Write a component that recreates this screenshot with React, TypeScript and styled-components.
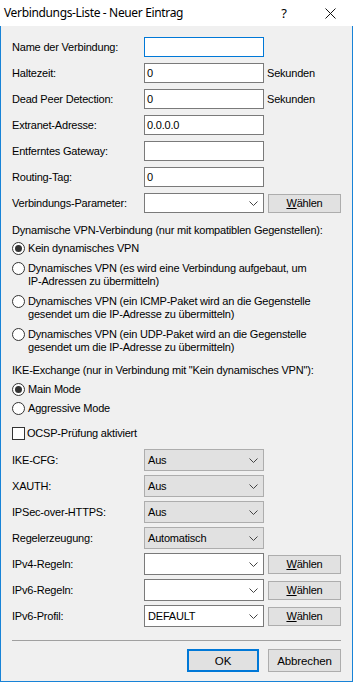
import React from "react";
import styled, { createGlobalStyle } from "styled-components";

const Global = createGlobalStyle`
  html, body { margin: 0; padding: 0; background: #f0f0f0; overflow: hidden; }
  * { box-sizing: border-box; }
`;

const Window = styled.div`
  width: 353px;
  height: 682px;
  display: flex;
  flex-direction: column;
  background: #f0f0f0;
  border: 1px solid #1883d7;
  border-top: none;
  font-family: "Liberation Sans", Arial, sans-serif;
  font-size: 11px;
  letter-spacing: -0.2px;
  color: #000;
`;

const TitleBar = styled.div`
  height: 26px;
  flex: none;
  background: #fff;
  display: flex;
  align-items: center;
  margin: 0 -1px;
  padding-left: 4px;
`;

const Title = styled.div`
  flex: 1;
  font-family: "Noto Sans", "Open Sans", sans-serif;
  font-size: 12px;
  letter-spacing: -0.35px;
  color: #000;
  padding-bottom: 1px;
`;

const TitleButton = styled.div<{ $w: number }>`
  width: ${(p) => p.$w}px;
  height: 26px;
  display: flex;
  align-items: center;
  justify-content: center;
  font-family: "Noto Sans", sans-serif;
  font-size: 13px;
  letter-spacing: 0;
`;

const Client = styled.div`
  flex: 1;
  display: flex;
  flex-direction: column;
  padding: 0 11px 9px 11px;
`;

const Rows = styled.div<{ $mt: number; $gap: number }>`
  display: flex;
  flex-direction: column;
  gap: ${(p) => p.$gap}px;
  margin-top: ${(p) => p.$mt}px;
`;

const Row = styled.div<{ $h: number }>`
  display: grid;
  grid-template-columns: 128px 120px 73px;
  column-gap: 4px;
  align-items: center;
  height: ${(p) => p.$h}px;
`;

const Label = styled.div`
  white-space: nowrap;
`;

const TextBox = styled.div<{ $focus?: boolean }>`
  height: 20px;
  background: #fff;
  border: 1px solid ${(p) => (p.$focus ? "#0078d7" : "#7a7a7a")};
  padding: 0 2px;
  display: flex;
  align-items: center;
  color: #000;
`;

const Unit = styled.div`
  margin-left: -1px;
  white-space: nowrap;
`;

const Combo = styled.div<{ $gray?: boolean; $h: number }>`
  height: ${(p) => p.$h}px;
  background: ${(p) => (p.$gray ? "#e1e1e1" : "#fff")};
  border: 1px solid ${(p) => (p.$gray ? "#adadad" : "#7a7a7a")};
  display: flex;
  align-items: center;
  padding: 0 5px 0 3px;
`;

const ComboText = styled.div`
  flex: 1;
  white-space: nowrap;
`;

const Button = styled.div<{ $h: number; $default?: boolean }>`
  height: ${(p) => p.$h}px;
  background: #e1e1e1;
  border: ${(p) => (p.$default ? "2px solid #0078d7" : "1px solid #adadad")};
  display: flex;
  align-items: center;
  justify-content: center;
  white-space: nowrap;
`;

const GroupHeader = styled.div<{ $mt: number }>`
  margin-top: ${(p) => p.$mt}px;
  line-height: 13px;
  white-space: nowrap;
`;

const OptionList = styled.div<{ $mt: number; $gap: number }>`
  display: flex;
  flex-direction: column;
  gap: ${(p) => p.$gap}px;
  margin-top: ${(p) => p.$mt}px;
`;

const Option = styled.div`
  display: flex;
  align-items: flex-start;
  gap: 3px;
  line-height: 13px;
`;

const RadioCircle = styled.div<{ $checked?: boolean }>`
  width: 13px;
  height: 13px;
  flex: none;
  border-radius: 50%;
  border: 1px solid #333;
  background: #fff;
  display: flex;
  align-items: center;
  justify-content: center;
  &::after {
    content: "";
    width: 7px;
    height: 7px;
    border-radius: 50%;
    background: ${(p) => (p.$checked ? "#333" : "transparent")};
  }
`;

const CheckBox = styled.div`
  width: 13px;
  height: 13px;
  flex: none;
  border: 1px solid #333;
  background: #fff;
`;

const CheckRow = styled(Option)`
  margin-top: 12px;
  gap: 2px;
`;

const Separator = styled.div`
  margin-top: 13px;
  height: 1px;
  background: #a0a0a0;
`;

const Footer = styled.div`
  margin-top: 8px;
  display: flex;
  justify-content: flex-end;
  gap: 9px;
`;

const FooterButton = styled(Button)<{ $w: number }>`
  width: ${(p) => p.$w}px;
  font-size: 11.5px;
  letter-spacing: -0.1px;
`;

const Chevron = () => (
  <svg width="9" height="5" viewBox="0 0 9 5">
    <polyline points="0.5,0.5 4.5,4.5 8.5,0.5" fill="none" stroke="#444" strokeWidth="1" />
  </svg>
);

const CloseIcon = () => (
  <svg width="11" height="11" viewBox="0 0 11 11">
    <path d="M0.5 0.5 L10.5 10.5 M10.5 0.5 L0.5 10.5" stroke="#111" strokeWidth="1" />
  </svg>
);

const Waehlen = () => (
  <Button $h={19}>
    <span>
      <u>W</u>ählen
    </span>
  </Button>
);

const textRows: { label: string; value: string; unit?: string; focus?: boolean }[] = [
  { label: "Name der Verbindung:", value: "", focus: true },
  { label: "Haltezeit:", value: "0", unit: "Sekunden" },
  { label: "Dead Peer Detection:", value: "0", unit: "Sekunden" },
  { label: "Extranet-Adresse:", value: "0.0.0.0" },
  { label: "Entferntes Gateway:", value: "" },
  { label: "Routing-Tag:", value: "0" },
];

const selectRows: { label: string; value: string; gray: boolean; pick?: boolean }[] = [
  { label: "IKE-CFG:", value: "Aus", gray: true },
  { label: "XAUTH:", value: "Aus", gray: true },
  { label: "IPSec-over-HTTPS:", value: "Aus", gray: true },
  { label: "Regelerzeugung:", value: "Automatisch", gray: true },
  { label: "IPv4-Regeln:", value: "", gray: false, pick: true },
  { label: "IPv6-Regeln:", value: "", gray: false, pick: true },
  { label: "IPv6-Profil:", value: "DEFAULT", gray: false, pick: true },
];

export default function App() {
  return (
    <>
      <Global />
      <Window>
        <TitleBar>
          <Title>Verbindungs-Liste - Neuer Eintrag</Title>
          <TitleButton $w={46}>?</TitleButton>
          <TitleButton $w={46}>
            <CloseIcon />
          </TitleButton>
        </TitleBar>
        <Client>
          <Rows $mt={11} $gap={6}>
            {textRows.map((r) => (
              <Row key={r.label} $h={20}>
                <Label>{r.label}</Label>
                <TextBox $focus={r.focus}>{r.value}</TextBox>
                {r.unit ? <Unit>{r.unit}</Unit> : <span />}
              </Row>
            ))}
            <Row $h={20}>
              <Label>Verbindungs-Parameter:</Label>
              <Combo $h={20}>
                <ComboText />
                <Chevron />
              </Combo>
              <Waehlen />
            </Row>
          </Rows>

          <GroupHeader $mt={11}>
            Dynamische VPN-Verbindung (nur mit kompatiblen Gegenstellen):
          </GroupHeader>
          <OptionList $mt={5} $gap={7}>
            <Option>
              <RadioCircle $checked />
              <span>Kein dynamisches VPN</span>
            </Option>
            <Option>
              <RadioCircle />
              <span>
                Dynamisches VPN (es wird eine Verbindung aufgebaut, um
                <br />
                IP-Adressen zu übermitteln)
              </span>
            </Option>
            <Option>
              <RadioCircle />
              <span>
                Dynamisches VPN (ein ICMP-Paket wird an die Gegenstelle
                <br />
                gesendet um die IP-Adresse zu übermitteln)
              </span>
            </Option>
            <Option>
              <RadioCircle />
              <span>
                Dynamisches VPN (ein UDP-Paket wird an die Gegenstelle
                <br />
                gesendet um die IP-Adresse zu übermitteln)
              </span>
            </Option>
          </OptionList>

          <GroupHeader $mt={10}>
            IKE-Exchange (nur in Verbindung mit "Kein dynamisches VPN"):
          </GroupHeader>
          <OptionList $mt={6} $gap={6}>
            <Option>
              <RadioCircle $checked />
              <span>Main Mode</span>
            </Option>
            <Option>
              <RadioCircle />
              <span>Aggressive Mode</span>
            </Option>
          </OptionList>

          <CheckRow>
            <CheckBox />
            <span>OCSP-Prüfung aktiviert</span>
          </CheckRow>

          <Rows $mt={9} $gap={4}>
            {selectRows.map((r) => (
              <Row key={r.label} $h={22}>
                <Label>{r.label}</Label>
                <Combo $gray={r.gray} $h={22}>
                  <ComboText>{r.value}</ComboText>
                  <Chevron />
                </Combo>
                {r.pick ? <Waehlen /> : <span />}
              </Row>
            ))}
          </Rows>

          <Separator />
          <Footer>
            <FooterButton $h={23} $w={72} $default>
              OK
            </FooterButton>
            <FooterButton $h={23} $w={73}>
              Abbrechen
            </FooterButton>
          </Footer>
        </Client>
      </Window>
    </>
  );
}
